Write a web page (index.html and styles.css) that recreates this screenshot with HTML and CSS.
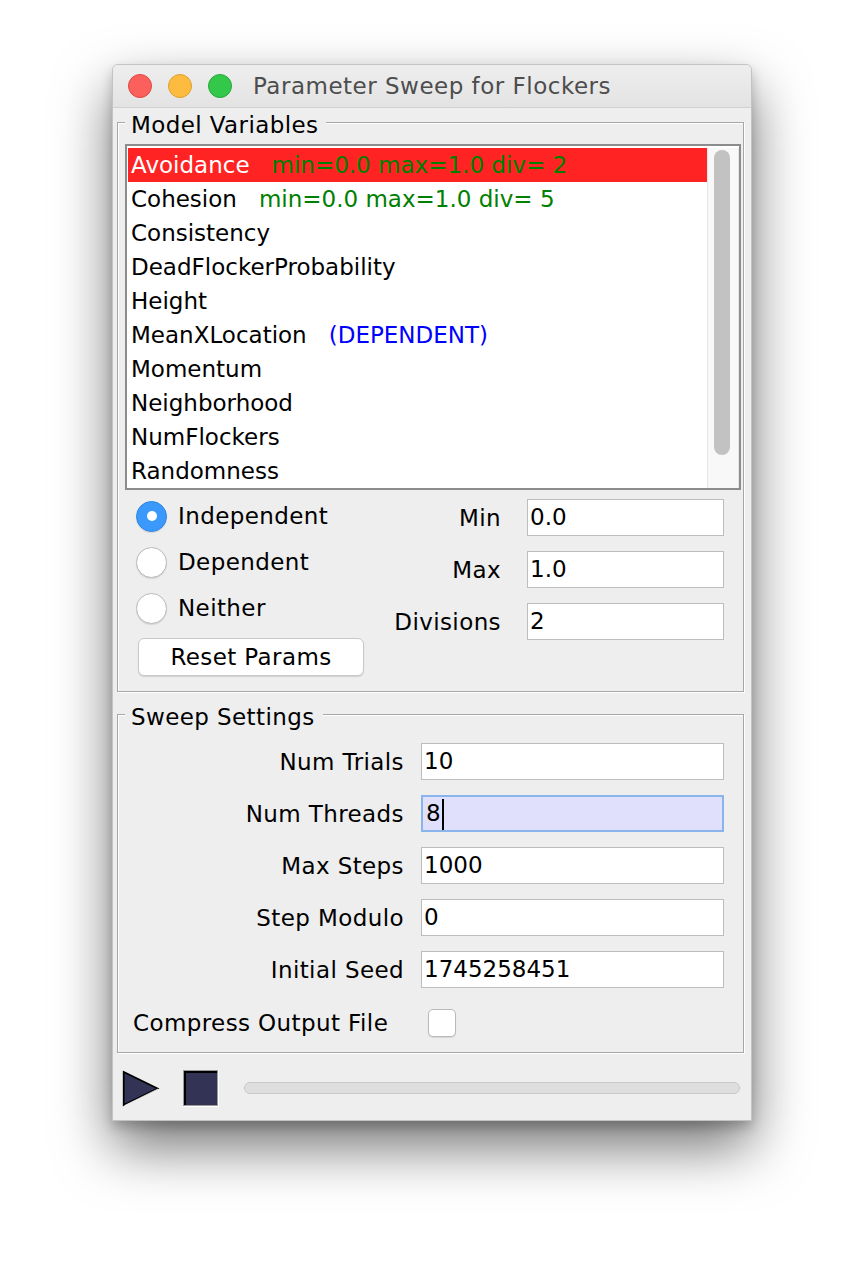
FILE: index.html
```html
<!DOCTYPE html>
<html>
<head>
<meta charset="utf-8">
<title>Parameter Sweep for Flockers</title>
<link rel="stylesheet" href="styles.css">
</head>
<body>
<div class="window">
  <div class="titlebar">
    <div class="lights">
      <span class="light red"></span>
      <span class="light yellow"></span>
      <span class="light green"></span>
    </div>
    <div class="title">Parameter Sweep for Flockers</div>
    <div class="spacer"></div>
  </div>
  <div class="content">
    <fieldset class="group group-vars">
      <legend>Model Variables</legend>
      <div class="list">
        <div class="rows">
          <div class="row selected"><span class="name">Avoidance</span><span class="range">min=0.0 max=1.0 div= 2</span></div>
          <div class="row"><span class="name">Cohesion</span><span class="range">min=0.0 max=1.0 div= 5</span></div>
          <div class="row"><span class="name">Consistency</span></div>
          <div class="row"><span class="name">DeadFlockerProbability</span></div>
          <div class="row"><span class="name">Height</span></div>
          <div class="row"><span class="name">MeanXLocation</span><span class="dep">(DEPENDENT)</span></div>
          <div class="row"><span class="name">Momentum</span></div>
          <div class="row"><span class="name">Neighborhood</span></div>
          <div class="row"><span class="name">NumFlockers</span></div>
          <div class="row"><span class="name">Randomness</span></div>
        </div>
        <div class="scrollbar"><div class="thumb"></div></div>
      </div>
      <div class="param-panel">
        <div class="radios">
          <div class="radio-row"><span class="radio checked"></span><span>Independent</span></div>
          <div class="radio-row"><span class="radio"></span><span>Dependent</span></div>
          <div class="radio-row"><span class="radio"></span><span>Neither</span></div>
          <button class="btn" type="button">Reset Params</button>
        </div>
        <div class="range-grid">
          <span class="lbl">Min</span><div class="field">0.0</div>
          <span class="lbl">Max</span><div class="field">1.0</div>
          <span class="lbl">Divisions</span><div class="field">2</div>
        </div>
      </div>
    </fieldset>

    <fieldset class="group group-sweep">
      <legend>Sweep Settings</legend>
      <div class="sweep-grid">
        <span class="lbl">Num Trials</span><div class="field">10</div>
        <span class="lbl">Num Threads</span><div class="field focused">8<span class="caret"></span></div>
        <span class="lbl">Max Steps</span><div class="field">1000</div>
        <span class="lbl">Step Modulo</span><div class="field">0</div>
        <span class="lbl">Initial Seed</span><div class="field">1745258451</div>
        <span class="lbl lbl-left">Compress Output File</span><span class="checkbox"></span>
      </div>
    </fieldset>

    <div class="controls">
      <svg class="play" width="38" height="37" viewBox="0 0 38 37">
        <polygon points="0.5,0.5 37.5,18.5 0.5,36.5" fill="#9a9a9a"/>
        <polygon points="1.8,2 35.5,18.5 1.8,35" fill="#333355" stroke="#000" stroke-width="1.6" stroke-linejoin="miter"/>
        <polyline points="2.5,35.6 36,19" fill="none" stroke="#fff" stroke-width="0.8"/>
      </svg>
      <svg class="stop" width="36" height="37" viewBox="0 0 36 37">
        <rect x="0" y="0" width="36" height="37" fill="#fff"/>
        <rect x="0" y="0" width="35" height="36" fill="#9a9a9a"/>
        <rect x="1" y="1" width="33" height="34" fill="#000"/>
        <rect x="3" y="3" width="31" height="32" fill="#333355"/>
      </svg>
      <div class="progress"></div>
    </div>
  </div>
</div>
</body>
</html>
```

FILE: styles.css
```css
* {
  box-sizing: border-box;
}

html, body {
  margin: 0;
  padding: 0;
  background: #ffffff;
}

body {
  font-family: "DejaVu Sans", "Liberation Sans", sans-serif;
  font-size: 23px;
  letter-spacing: 0.4px;
  color: #000;
  height: 1280px;
}

.window {
  margin: 64px 0 0 112px;
  width: 640px;
  border: 1px solid #c3c3c3;
  border-radius: 6px 6px 0 0;
  background: #eeeeee;
  box-shadow: 0 26px 56px rgba(0, 0, 0, 0.55), 0 6px 12px rgba(0, 0, 0, 0.2);
  overflow: hidden;
}

/* Title bar */
.titlebar {
  display: flex;
  align-items: center;
  height: 43px;
  border-bottom: 1px solid #d1d1d1;
  background: linear-gradient(#eeeeee, #e3e3e3);
}

.lights {
  width: 119px;
  flex: none;
  display: flex;
  gap: 16px;
  padding-left: 15px;
}

.light {
  width: 24px;
  height: 24px;
  border-radius: 50%;
  flex: none;
}

.light.red {
  background: #fc605c;
  border: 1px solid #e0463f;
}

.light.yellow {
  background: #fdbc40;
  border: 1px solid #de9f2c;
}

.light.green {
  background: #34c84a;
  border: 1px solid #25a938;
}

.title {
  flex: 1;
  text-align: center;
  color: #4d4d4d;
  letter-spacing: 0.5px;
  white-space: nowrap;
}

.spacer {
  width: 119px;
  flex: none;
}

/* Content */
.content {
  padding: 0 7px 0 4px;
}

.group {
  margin: 0;
  min-inline-size: 0;
  border: 1px solid #a6a6a6;
  box-shadow: inset 1px 1px 0 #ffffff, 1px 1px 0 #ffffff;
}

.group legend {
  padding: 6px 8px 0 6px;
  line-height: 18px;
  background: #eeeeee;
}

.group-vars {
  margin-top: 2px;
  padding: 10px 2px 15px 7px;
}

.group-sweep {
  margin-top: 10px;
  padding: 17px 19px 9px 15px;
}

.group-sweep legend {
  margin-left: -8px;
}

/* List */
.list {
  display: flex;
  height: 346px;
  border: 2px solid #8c8c8c;
  background: #ffffff;
  padding: 2px 0 0 1px;
}

.rows {
  width: 579px;
  flex: none;
  letter-spacing: 0;
}

.row {
  height: 34px;
  line-height: 34px;
  padding-left: 3px;
  white-space: nowrap;
}

.row.selected {
  background: #ff2323;
  color: #ffffff;
}

.range {
  color: #008000;
  margin-left: 22px;
}

.dep {
  color: #0000ff;
  margin-left: 22px;
}

.scrollbar {
  width: 32px;
  flex: none;
  background: #f8f8f8;
  border-left: 1px solid #e6e6e6;
  border-right: 1px solid #e6e6e6;
  padding: 2px 0 0 6px;
}

.thumb {
  width: 16px;
  height: 305px;
  border-radius: 8px;
  background: #c2c2c2;
}

/* Parameter panel */
.param-panel {
  display: flex;
}

.radios {
  display: flex;
  flex-direction: column;
  align-items: flex-start;
  padding: 3px 0 0 11px;
}

.radio-row {
  display: flex;
  align-items: center;
  gap: 11px;
  height: 46px;
}

.radio {
  width: 31px;
  height: 31px;
  flex: none;
  border-radius: 50%;
  background: #ffffff;
  border: 1px solid #bababa;
  box-shadow: 0 1px 1px rgba(0, 0, 0, 0.1);
}

.radio.checked {
  background: #3b99fc;
  border-color: #2f86e4;
  display: flex;
  align-items: center;
  justify-content: center;
}

.radio.checked::after {
  content: "";
  width: 10px;
  height: 10px;
  border-radius: 50%;
  background: #ffffff;
}

.btn {
  margin: 7px 0 0 2px;
  width: 226px;
  height: 38px;
  padding: 0;
  border: 1px solid #c8c8c8;
  border-radius: 6px;
  background: #ffffff;
  box-shadow: 0 1px 1px rgba(0, 0, 0, 0.12);
  font-family: inherit;
  font-size: inherit;
  letter-spacing: inherit;
  color: #000;
}

.range-grid {
  margin-left: auto;
  margin-right: 17px;
  padding-top: 9px;
  display: grid;
  grid-template-columns: auto 197px;
  grid-auto-rows: 37px;
  row-gap: 15px;
  column-gap: 26px;
  align-items: center;
  align-content: start;
}

.lbl {
  text-align: right;
  white-space: nowrap;
}

.field {
  height: 37px;
  border: 1px solid #bdbdbd;
  background: #ffffff;
  padding-left: 2px;
  line-height: 35px;
  letter-spacing: 0;
  white-space: nowrap;
}

.field.focused {
  background: #e0e0fd;
  border: 2px solid #8ab5ec;
  padding-left: 3px;
  line-height: 33px;
}

.caret {
  display: inline-block;
  width: 2px;
  height: 31px;
  background: #000;
  vertical-align: middle;
  margin-left: 1px;
}

/* Sweep settings */
.sweep-grid {
  display: grid;
  grid-template-columns: 271px 303px;
  grid-template-rows: repeat(5, 37px) 40px;
  column-gap: 17px;
  row-gap: 15px;
  align-items: center;
}

.sweep-grid .lbl {
  justify-self: end;
}

.sweep-grid .lbl-left {
  justify-self: start;
}

.checkbox {
  justify-self: start;
  margin-left: 7px;
  width: 28px;
  height: 28px;
  border: 1px solid #b9b9b9;
  border-radius: 5px;
  background: #ffffff;
  box-shadow: 0 1px 1px rgba(0, 0, 0, 0.1);
}

/* Controls */
.controls {
  display: flex;
  align-items: center;
  height: 67px;
  padding: 3px 4px 0 5px;
}

.play,
.stop {
  flex: none;
  display: block;
}

.stop {
  margin-left: 23px;
}

.progress {
  flex: 1;
  margin-left: 25px;
  height: 12px;
  border: 1px solid #c8c8c8;
  border-radius: 6px;
  background: #dedede;
}
```
